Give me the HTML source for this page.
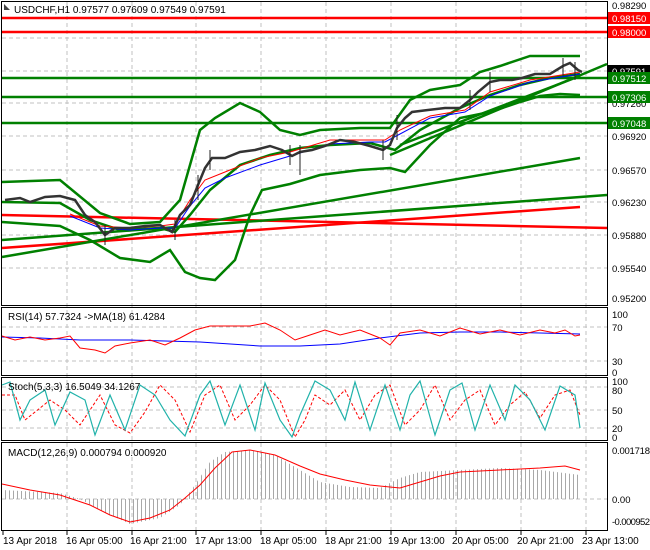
<!DOCTYPE html>
<html><head><style>
body{margin:0;background:#fff;width:650px;height:550px;overflow:hidden}
svg{display:block;font-family:"Liberation Sans",sans-serif}
</style></head><body>
<svg width="650" height="550" viewBox="0 0 650 550">
<defs>
<pattern id="hb" width="4" height="4" patternUnits="userSpaceOnUse"><rect x="1" width="1" height="4" fill="#a8a8a8"/></pattern>
</defs>
<rect width="650" height="550" fill="#fff"/>
<g stroke="#c0c0c0" stroke-dasharray="4,3" stroke-width="1">
<path d="M67 2V530M132 2V530M196 2V530M261 2V530M326 2V530M391 2V530M456 2V530M521 2V530M586 2V530"/>
<path d="M2 38H607M2 71H607M2 103H607M2 136H607M2 170H607M2 202H607M2 235H607M2 268H607"/>
<path d="M2 327H607M2 361H607M2 387H607M2 410H607M2 428H607M2 499H607"/>
</g>
<g fill="none" stroke="#000" stroke-width="1">
<rect x="1.5" y="1.5" width="606" height="304"/>
<rect x="1.5" y="307.5" width="606" height="68"/>
<rect x="1.5" y="377.5" width="606" height="63"/>
<rect x="1.5" y="442.5" width="606" height="88"/>
</g>
<g stroke-width="2.5">
<path d="M2 18H607M2 32H607" stroke="#f00"/>
<path d="M2 78H607M2 97H607M2 123H607" stroke="#008000"/>
</g>
<g fill="none" stroke-width="2.5">
<path d="M2 215L607 228" stroke="#f00"/>
<path d="M2 248L580 207" stroke="#f00"/>
<path d="M2 257L580 158" stroke="#008000"/>
<path d="M2 240L607 195" stroke="#008000"/>
<path d="M390 155L607 64" stroke="#008000"/>
<path d="M400 145L580 76" stroke="#008000"/>
<path stroke="#008000" d="M2 182L60 180L100 213L130 224L160 222L180 200L200 130L215 118L240 103L260 112L280 130L300 135L320 130L360 128L390 128L410 100L430 90L460 85L480 72L500 66L530 56L560 56L580 56"/>
<path stroke="#008000" d="M2 222L60 226L90 240L120 258L150 262L170 250L185 272L200 278L215 280L235 260L250 215L262 190L290 184L320 175L360 170L390 168L405 172L430 145L460 118L490 112L520 102L540 96L560 94L580 95"/>
<path stroke="#008000" d="M2 202L60 203L90 220L120 230L160 228L175 232L190 215L210 190L240 165L270 155L300 148L330 145L370 143L395 150L420 130L460 108L490 95L520 85L550 78L580 74"/>
</g>
<g fill="none" stroke-width="1">
<path stroke="#f00" d="M70 214L100 226L130 228L160 226L175 224L190 200L205 180L225 172L260 158L290 152L330 140L370 140L385 140L400 130L430 116L465 110L490 92L530 80L580 72"/>
<path stroke="#00f" d="M70 216L100 228L130 230L160 228L175 228L190 206L205 188L225 178L260 165L290 156L330 144L370 142L385 142L400 134L430 118L465 112L490 96L530 82L580 74"/>
</g>
<path fill="none" stroke="#333" stroke-width="2.5" d="M5 200L20 198L30 202L45 197L60 196L75 200L85 215L95 222L105 235L115 228L130 228L145 226L160 225L172 232L180 215L190 205L198 185L205 168L212 158L225 158L240 152L255 150L270 146L282 150L292 156L300 152L312 150L325 146L340 140L355 142L370 146L383 150L390 145L397 128L405 118L412 112L428 110L445 108L460 108L470 100L478 92L490 82L500 80L512 80L522 78L535 74L550 74L563 66L570 63L578 70L582 72"/>
<g stroke="#222" stroke-width="1">
<path d="M105 225V245M175 220V240M198 175V200M210 150V170M290 145V165M300 145V175M383 140V160M397 115V140M470 90V110M490 72V92M563 58V76M575 62V80"/>
</g>
<path fill="none" stroke="#00f" d="M2 337L40 338L80 340L130 340L200 342L260 346L300 346L340 344L380 338L420 333L460 332L500 332L540 333L580 334"/>
<path fill="none" stroke="#f00" d="M2 336L15 340L30 337L45 340L60 338L70 336L80 348L95 350L105 353L115 346L130 343L150 340L165 345L180 338L195 330L210 326L230 326L250 326L265 323L280 330L295 340L310 335L325 330L340 335L360 330L380 338L390 345L400 333L420 330L440 336L460 328L480 334L500 330L520 335L540 330L555 333L565 330L575 336L580 335"/>
<path fill="none" stroke="#f00" stroke-dasharray="3,2" d="M2 395L15 395L25 420L35 412L50 400L65 410L80 425L90 410L100 395L115 425L130 433L145 412L160 385L175 400L190 432L205 395L220 385L235 420L250 405L265 385L280 400L295 437L305 420L315 395L330 405L345 390L360 420L375 395L390 385L405 425L420 410L435 385L450 420L465 400L480 390L495 425L510 405L525 392L540 418L555 395L570 390L580 415"/>
<path fill="none" stroke="#20b2aa" stroke-width="1.2" d="M2 385L10 382L20 420L30 400L45 390L55 425L70 392L85 400L95 435L110 395L125 430L140 385L155 395L170 420L185 436L200 395L210 381L225 425L240 385L255 430L265 383L280 420L292 437L300 415L315 381L330 390L345 420L355 382L370 430L385 385L400 430L410 395L420 381L435 435L450 390L462 383L475 430L490 385L505 420L515 385L530 400L545 430L560 386L575 395L580 428"/>
<path fill="url(#hb)" d="M2 499L2 490L60 493L80 499L100 510L130 524L160 518L180 505L195 485L210 462L225 452L250 450L275 455L300 470L320 482L350 487L380 488L400 478L420 472L460 470L500 468L540 470L580 475L580 499Z"/>
<path fill="none" stroke="#f00" stroke-width="1" d="M2 484L30 490L60 495L90 505L110 515L130 522L150 518L170 510L185 498L200 485L215 468L232 452L250 450L275 455L300 466L320 474L345 480L370 485L400 488L420 482L440 476L460 472L500 470L540 468L565 466L580 470"/>
<g font-size="10" fill="#000">
<text x="14" y="13">USDCHF,H1  0.97577 0.97609 0.97549 0.97591</text>
<text x="8" y="320">RSI(14) 57.7324  -&gt;MA(18) 61.4284</text>
<text x="8" y="390">Stoch(5,3,3) 16.5049 34.1267</text>
<text x="8" y="456">MACD(12,26,9) 0.000794 0.000920</text>
</g>
<path d="M4 4L10 10H4Z" fill="#444"/>
<g font-size="9.5" fill="#000">
<text x="612" y="9">0.98290</text>
<text x="612" y="107">0.97260</text>
<text x="612" y="140">0.96920</text>
<text x="612" y="174">0.96570</text>
<text x="612" y="206">0.96230</text>
<text x="612" y="239">0.95880</text>
<text x="612" y="272">0.95540</text>
<text x="612" y="302">0.95200</text>
<text x="612" y="318">100</text>
<text x="612" y="331">70</text>
<text x="612" y="365">30</text>
<text x="612" y="376">0</text>
<text x="612" y="385">100</text>
<text x="612" y="394">80</text>
<text x="612" y="414">50</text>
<text x="612" y="432">20</text>
<text x="612" y="441">0</text>
<text x="612" y="454" textLength="38">0.001718</text>
<text x="612" y="503">0.00</text>
<text x="612" y="525" textLength="38">-0.000952</text>
</g>
<g font-size="9.5">
<rect x="608" y="12" width="42" height="12" fill="#f00"/><text x="612" y="22" fill="#fff">0.98150</text>
<rect x="608" y="26" width="42" height="12" fill="#f00"/><text x="612" y="36" fill="#fff">0.98000</text>
<rect x="608" y="65" width="42" height="12" fill="#000"/><text x="612" y="75" fill="#fff">0.97591</text>
<rect x="608" y="72" width="42" height="12" fill="#008000"/><text x="612" y="82" fill="#fff">0.97512</text>
<rect x="608" y="91" width="42" height="12" fill="#008000"/><text x="612" y="101" fill="#fff">0.97306</text>
<rect x="608" y="117" width="42" height="12" fill="#008000"/><text x="612" y="127" fill="#fff">0.97048</text>
</g>
<g stroke="#000"><path d="M3 531v4M67 531v4M132 531v4M196 531v4M261 531v4M326 531v4M391 531v4M456 531v4M521 531v4M586 531v4"/></g>
<g font-size="10" fill="#000">
<text x="3" y="544">13 Apr 2018</text>
<text x="66" y="544">16 Apr 05:00</text>
<text x="130" y="544">16 Apr 21:00</text>
<text x="195" y="544">17 Apr 13:00</text>
<text x="260" y="544">18 Apr 05:00</text>
<text x="325" y="544">18 Apr 21:00</text>
<text x="388" y="544">19 Apr 13:00</text>
<text x="452" y="544">20 Apr 05:00</text>
<text x="517" y="544">20 Apr 21:00</text>
<text x="582" y="544">23 Apr 13:00</text>
</g>
</svg>
</body></html>
